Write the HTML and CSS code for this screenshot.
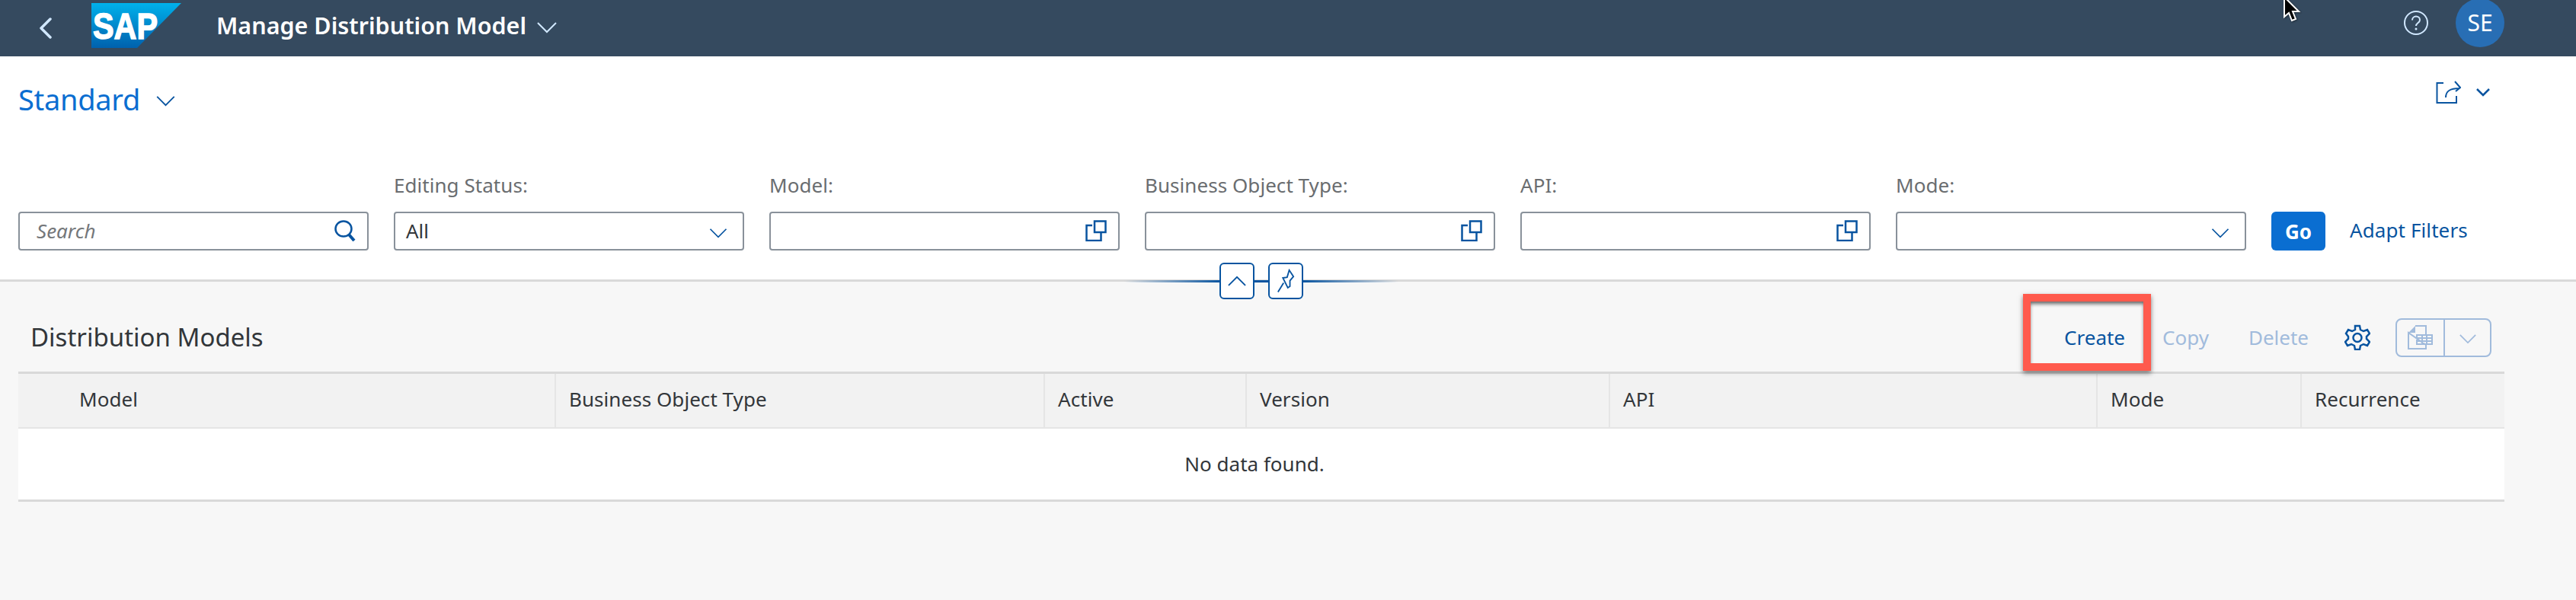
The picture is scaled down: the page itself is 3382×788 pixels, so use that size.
FILE: index.html
```html
<!DOCTYPE html>
<html lang="en">
<head>
<meta charset="utf-8">
<title>Manage Distribution Model</title>
<link rel="stylesheet" href="styles.css">
</head>
<body>
<header class="shell">
  <div class="shell-left">
    <svg class="back" viewBox="0 0 18 28"><path d="M15 2 3 14l12 12"/></svg>
    <svg class="logo" viewBox="0 0 118 59">
      <defs><linearGradient id="sapg" x1="0" y1="0" x2="0" y2="1"><stop offset="0" stop-color="#00b1eb"/><stop offset="1" stop-color="#0061ae"/></linearGradient></defs>
      <polygon points="0,0 118,0 60,59 0,59" fill="url(#sapg)"/>
      <text class="logo-text" x="2" y="47" textLength="85" lengthAdjust="spacingAndGlyphs">SAP</text>
    </svg>
    <span class="app-title">Manage Distribution Model</span>
    <svg class="title-chev" viewBox="0 0 26 16"><path d="M1 2l12 12L25 2"/></svg>
  </div>
  <div class="shell-right">
    <svg class="help" viewBox="0 0 32 32"><circle cx="16" cy="16" r="15"/><path d="M11 12.500c0-3 2.300-5 5-5s5 2 5 4.700c0 3.800-5 3.800-5 7.800"/><circle class="dot" cx="16" cy="24" r="1.500"/></svg>
    <span class="avatar">SE</span>
  </div>
</header>
<svg class="cursor" viewBox="0 0 24 32"><path d="M1-4v26l6-5 4 10 5-2-4-10h8z"/></svg>

<section class="filter-head">
  <div class="variant-row">
    <div class="variant">
      <span class="variant-name">Standard</span>
      <svg class="variant-chev" viewBox="0 0 26 16"><path d="M1 2l12 12L25 2"/></svg>
    </div>
    <div class="share">
      <svg class="share-icon" viewBox="0 0 33 32"><path d="M10 4H1.500v26h25.500v-9M13 23c0-8 5-12 18-12M25 2l7 8-6 5"/></svg>
      <svg class="share-chev" viewBox="0 0 20 12"><path d="M2 2l8 8 8-8"/></svg>
    </div>
  </div>
  <div class="filter-bar">
    <div class="field">
      <div class="input"><span class="placeholder">Search</span>
        <svg class="ic" viewBox="0 0 28 28"><ellipse cx="12" cy="11.500" rx="10.500" ry="10"/><path class="thick" d="M19 19l7 8"/></svg>
      </div>
    </div>
    <div class="field">
      <label class="label">Editing Status:</label>
      <div class="input"><span class="value">All</span>
        <svg class="ic chev" viewBox="0 0 26 16"><path d="M1 2l12 12L25 2"/></svg>
      </div>
    </div>
    <div class="field">
      <label class="label">Model:</label>
      <div class="input"><svg class="ic" viewBox="0 0 28 28"><path d="M9 7H1.500v20h19V16M12 1.500h14.500v14.500H12z"/></svg></div>
    </div>
    <div class="field">
      <label class="label">Business Object Type:</label>
      <div class="input"><svg class="ic" viewBox="0 0 28 28"><path d="M9 7H1.500v20h19V16M12 1.500h14.500v14.500H12z"/></svg></div>
    </div>
    <div class="field">
      <label class="label">API:</label>
      <div class="input"><svg class="ic" viewBox="0 0 28 28"><path d="M9 7H1.500v20h19V16M12 1.500h14.500v14.500H12z"/></svg></div>
    </div>
    <div class="field">
      <label class="label">Mode:</label>
      <div class="input"><svg class="ic chev" viewBox="0 0 26 16"><path d="M1 2l12 12L25 2"/></svg></div>
    </div>
    <button class="go">Go</button>
    <span class="adapt">Adapt Filters</span>
  </div>
  <div class="collapse">
    <span class="collapse-btn"><svg viewBox="0 0 26 16"><path d="M1 14L13 2l12 12"/></svg></span>
    <span class="collapse-btn"><svg viewBox="0 0 26 34"><path d="M2 33l8-13M9 13l6-1 3-10 6 9-5 6 0 8-3 2-7-14z"/></svg></span>
  </div>
</section>

<main class="content">
  <div class="toolbar">
    <h2 class="table-title">Distribution Models</h2>
    <div class="actions">
      <span class="act act-create">Create</span>
      <span class="act act-off act-copy">Copy</span>
      <span class="act act-off">Delete</span>
      <svg class="gear" viewBox="0 0 34 34"><path d="M14 2h6l1 5 4 2 5-2 3 5-4 4v3l4 4-3 5-5-2-4 2-1 5h-6l-1-5-4-2-5 2-3-5 4-4v-3L2 12l3-5 5 2 4-2z"/><circle cx="17" cy="17.500" r="5.500"/></svg>
      <div class="export">
        <span class="export-main"><svg viewBox="0 0 33 32"><path d="M10 1h14v11M24 26v5H1V10zM12 13h20v12H12zM12 17h20M12 21h20M19 13v12M25 13v12"/><path class="fill" d="M1 10l9-9v9z"/></svg></span>
        <span class="export-arrow"><svg viewBox="0 0 26 16"><path d="M1 2l12 12L25 2"/></svg></span>
      </div>
    </div>
  </div>
  <div class="table">
    <div class="thead">
      <div class="th th-first">Model</div>
      <div class="th">Business Object Type</div>
      <div class="th">Active</div>
      <div class="th">Version</div>
      <div class="th">API</div>
      <div class="th">Mode</div>
      <div class="th th-last">Recurrence</div>
    </div>
    <div class="empty">No data found.</div>
  </div>
  <div class="highlight"></div>
</main>
</body>
</html>
```
FILE: styles.css
```css
* { box-sizing: border-box; }
html, body { margin: 0; height: 100%; }
body {
  position: relative;
  width: 3382px;
  height: 788px;
  overflow: hidden;
  background: #f7f7f7;
  font-family: "Noto Sans", "Open Sans", sans-serif;
  color: #32363a;
}
svg { display: block; fill: none; stroke: currentColor; }

.shell {
  height: 74px;
  background: #354a5f;
  display: flex;
  justify-content: space-between;
  align-items: center;
}
.shell-left { display: flex; align-items: center; }
.back { width: 18px; height: 28px; margin-left: 51px; color: #d1e8ff; stroke-width: 3.500; stroke-linecap: round; stroke-linejoin: round; }
.logo { width: 118px; height: 59px; margin: -8px 0 0 51px; stroke: none; }
.logo-text { font: 700 48px "Liberation Sans", sans-serif; fill: #fff; stroke: #fff; stroke-width: 1.500; }
.app-title { margin: -9px 0 0 46px; font-size: 30.500px; font-weight: 600; color: #fff; line-height: 38px; }
.title-chev { width: 26px; height: 16px; margin: -2px 0 0 14px; color: #d1e8ff; stroke-width: 2; }
.shell-right { display: flex; align-items: center; gap: 36px; padding-right: 94px; margin-top: -14px; }
.help { width: 32px; height: 32px; color: #d1e8ff; stroke-width: 2; }
.help .dot { fill: currentColor; stroke: none; }
.avatar {
  width: 64px; height: 64px; border-radius: 50%;
  background: #286eb4; color: #fff; font-size: 30px; line-height: 64px; text-align: center;
}
.cursor {
  position: absolute; left: 2998px; top: 0; width: 24px; height: 32px;
  fill: #000; stroke: #fff; stroke-width: 2; filter: drop-shadow(1px 1px 1px rgba(0,0,0,.4));
}

.filter-head {
  position: relative;
  height: 296px;
  background: #fff;
  border-bottom: 3px solid #d9d9d9;
  padding: 0 0 38px 24px;
  display: flex; flex-direction: column; justify-content: space-between;
}
.variant-row { display: flex; justify-content: space-between; align-items: flex-start; padding-right: 112px; padding-top: 31px; }
.variant { display: flex; align-items: center; }
.variant-name { font-size: 38px; line-height: 50px; color: #0a6ed1; letter-spacing: -.3px; }
.variant-chev { width: 25px; height: 15px; margin: 4px 0 0 21px; color: #0854a0; stroke-width: 2; }
.share { display: flex; align-items: center; }
.share-icon { width: 33px; height: 32px; color: #0854a0; stroke-width: 2; }
.share-chev { width: 20px; height: 12px; margin-left: 19px; color: #0854a0; stroke-width: 2.500; }

.filter-bar { display: flex; align-items: flex-end; }
.field { width: 460px; margin-right: 33px; display: flex; flex-direction: column; }
.label { font-size: 26px; line-height: 34px; color: #6a6d70; margin-bottom: 18px; letter-spacing: .05px; }
.input {
  height: 51px; border: 2px solid #89919a; border-radius: 4px; background: #fff;
  display: flex; align-items: center; justify-content: space-between; padding: 0 15px 2px 14px;
  position: relative;
}
.input .ic { width: 28px; height: 28px; margin-left: auto; color: #0854a0; stroke-width: 2.500; }
.input .ic.chev { width: 24px; height: 14px; margin-top: 6px; margin-right: 5px; stroke-width: 2; }
.input .thick { stroke-width: 4; }
.placeholder { font-size: 26px; font-style: italic; color: #74777a; padding-left: 8px; }
.value { font-size: 26px; color: #32363a; }
.go {
  width: 71px; height: 51px; border: 0; border-radius: 6px; background: #0a6ed1; color: #fff;
  font: 700 26px "Noto Sans", sans-serif; padding: 0;
}
.adapt { font-size: 26px; line-height: 49px; height: 51px; color: #0854a0; margin-left: 32px; letter-spacing: .1px; }

.collapse {
  position: absolute; left: 1476px; top: 271px; width: 360px; height: 48px;
  display: flex; justify-content: center; gap: 18px;
  background: linear-gradient(90deg, transparent, #0854a0 35%, #0854a0 65%, transparent) center 23px / 100% 3px no-repeat;
}
.collapse-btn {
  width: 46px; height: 48px; border: 2px solid #0854a0; border-radius: 6px; background: #fff;
  display: flex; align-items: center; justify-content: center; color: #0854a0;
}
.collapse-btn svg { width: 24px; stroke-width: 2; }

.content { position: relative; padding: 0 94px 0 24px; }
.toolbar { height: 118px; display: flex; justify-content: space-between; align-items: center; padding: 28px 0 0 16px; }
.table-title { margin: 0; font-size: 33px; font-weight: 400; line-height: 44px; color: #32363a; }
.actions { display: flex; align-items: center; padding-right: 17px; }
.act { font-size: 26px; }
.act-create { color: #0854a0; }
.act-off { color: #a1bbdc; }
.act-copy { margin: 0 52px 0 49px; }
.gear { width: 34px; height: 34px; margin-left: 47px; color: #0854a0; stroke-width: 2.500; }
.export {
  display: flex; width: 126px; height: 51px; margin-left: 33px;
  border: 2px solid #a1bbdc; border-radius: 8px; color: #a1bbdc;
}
.export-main { width: 63px; border-right: 2px solid #a1bbdc; display: flex; align-items: center; justify-content: center; }
.export-main svg { width: 33px; height: 32px; stroke-width: 2; }
.export-main .fill { fill: #a1bbdc; stroke: none; }
.export-arrow { flex: 1; display: flex; align-items: center; justify-content: center; padding-top: 4px; }
.export-arrow svg { width: 22px; height: 14px; stroke-width: 2; }

.table { width: 3264px; }
.thead {
  display: grid;
  grid-template-columns: 706px 642px 265px 477px 640px 268px 266px;
  height: 75px;
  background: #f2f2f2;
  border-top: 3px solid #d9d9d9;
  border-bottom: 2px solid #e5e5e5;
}
.th {
  font-size: 26px; line-height: 66px; padding-left: 17px; color: #32363a;
  border-right: 2px solid #e5e5e5; letter-spacing: .05px;
}
.th-first { padding-left: 80px; }
.th-last { border-right: 0; }
.empty {
  height: 96px; background: #fff; border-bottom: 3px solid #d9d9d9;
  font-size: 26px; line-height: 93px; text-align: center; padding-right: 18px; color: #32363a;
}
.highlight {
  position: absolute; left: 2656px; top: 16px; width: 168px; height: 101px;
  border: 10px solid #ff5a4d;
  box-shadow: 0 3px 6px rgba(0,0,0,.5), inset 0 4px 5px -1px rgba(0,0,0,.6);
}
```
